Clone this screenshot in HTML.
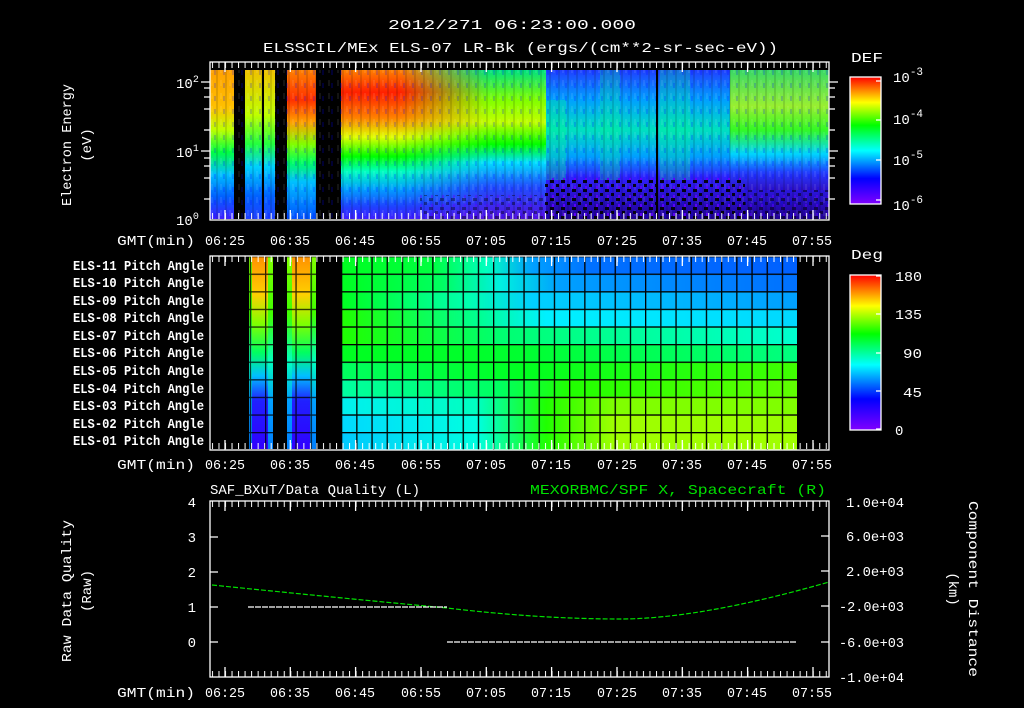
<!DOCTYPE html>
<html><head><meta charset="utf-8"><style>
html,body{margin:0;padding:0;background:#000;}
svg{display:block;}
text{font-family:"Liberation Mono","DejaVu Sans Mono",monospace;fill:#fff;font-size:14px;}
</style></head><body>
<svg width="1024" height="708" viewBox="0 0 1024 708" xmlns="http://www.w3.org/2000/svg">
<defs>
<linearGradient id="rain" x1="0" y1="1" x2="0" y2="0">
<stop offset="0" stop-color="#8000ff"/><stop offset="0.2" stop-color="#0000ff"/><stop offset="0.42" stop-color="#00ffff"/><stop offset="0.62" stop-color="#00ff00"/><stop offset="0.8" stop-color="#ffff00"/><stop offset="1" stop-color="#ff0000"/>
</linearGradient>
<linearGradient id="sA" x1="0" y1="0" x2="0" y2="1">
<stop offset="0" stop-color="#ffa000"/><stop offset="0.25" stop-color="#ffc000"/><stop offset="0.4" stop-color="#c0ff00"/><stop offset="0.55" stop-color="#00ff40"/><stop offset="0.7" stop-color="#00c0ff"/><stop offset="0.85" stop-color="#0060ff"/><stop offset="1" stop-color="#4020ff"/>
</linearGradient>
<linearGradient id="sB" x1="0" y1="0" x2="0" y2="1">
<stop offset="0" stop-color="#f0c000"/><stop offset="0.3" stop-color="#c0ff00"/><stop offset="0.5" stop-color="#20ff40"/><stop offset="0.65" stop-color="#00d0ff"/><stop offset="0.85" stop-color="#0060ff"/><stop offset="1" stop-color="#2040ff"/>
</linearGradient>
<linearGradient id="sC" x1="0" y1="0" x2="0" y2="1">
<stop offset="0" stop-color="#ff8000"/><stop offset="0.2" stop-color="#ff3000"/><stop offset="0.35" stop-color="#ffa000"/><stop offset="0.5" stop-color="#80ff00"/><stop offset="0.62" stop-color="#00ff60"/><stop offset="0.75" stop-color="#00c0ff"/><stop offset="1" stop-color="#0050ff"/>
</linearGradient>
<linearGradient id="sD" x1="0" y1="0" x2="0" y2="1">
<stop offset="0" stop-color="#ff8000"/><stop offset="0.15" stop-color="#ff2000"/><stop offset="0.32" stop-color="#ff8000"/><stop offset="0.45" stop-color="#e0ff00"/><stop offset="0.58" stop-color="#00ff00"/><stop offset="0.68" stop-color="#00ffc0"/><stop offset="0.8" stop-color="#00a0ff"/><stop offset="0.92" stop-color="#2040ff"/><stop offset="1" stop-color="#4020ff"/>
</linearGradient>
<linearGradient id="sD2" x1="0" y1="0" x2="0" y2="1">
<stop offset="0" stop-color="#00e080"/><stop offset="0.2" stop-color="#80ff00"/><stop offset="0.35" stop-color="#c0ff00"/><stop offset="0.5" stop-color="#00ff00"/><stop offset="0.62" stop-color="#00e0ff"/><stop offset="0.78" stop-color="#2050ff"/><stop offset="1" stop-color="#5010e0"/>
</linearGradient>
<linearGradient id="fadeW" x1="0" x2="1"><stop offset="0" stop-color="#fff" stop-opacity="0"/><stop offset="0.6" stop-color="#fff" stop-opacity="1"/><stop offset="1" stop-color="#fff" stop-opacity="1"/></linearGradient>
<mask id="mD" maskUnits="userSpaceOnUse" x="0" y="0" width="1024" height="708"><rect x="400" y="60" width="146" height="170" fill="url(#fadeW)"/></mask>
<linearGradient id="sE" x1="0" y1="0" x2="0" y2="1">
<stop offset="0" stop-color="#2040ff"/><stop offset="0.2" stop-color="#00a0ff"/><stop offset="0.4" stop-color="#00e0c0"/><stop offset="0.58" stop-color="#00a0ff"/><stop offset="0.72" stop-color="#3020ff"/><stop offset="1" stop-color="#200090"/>
</linearGradient>
<linearGradient id="sF" x1="0" y1="0" x2="0" y2="1">
<stop offset="0" stop-color="#40ff40"/><stop offset="0.3" stop-color="#c0ff00"/><stop offset="0.5" stop-color="#40ff00"/><stop offset="0.7" stop-color="#00e0ff"/><stop offset="0.85" stop-color="#2040ff"/><stop offset="1" stop-color="#3010c0"/>
</linearGradient>
<pattern id="noise" x="0" y="0" width="9" height="13" patternUnits="userSpaceOnUse">
<rect x="0" y="0" width="2" height="13" fill="#000" opacity="0.12"/><rect x="4" y="2" width="2" height="6" fill="#fff" opacity="0.08"/><rect x="7" y="5" width="2" height="5" fill="#0000ff" opacity="0.2"/>
</pattern>
<pattern id="speck" x="0" y="0" width="11" height="9" patternUnits="userSpaceOnUse">
<rect x="0" y="0" width="4" height="3" fill="#000"/><rect x="6" y="4" width="3" height="3" fill="#000"/><rect x="2" y="6" width="2" height="3" fill="#6000ff"/>
</pattern>
<pattern id="minB" x="225" y="0" width="6.53" height="708" patternUnits="userSpaceOnUse"><rect x="0" y="0" width="1" height="708" fill="#fff"/></pattern>
<pattern id="grid" x="341" y="256" width="15.2" height="17.6" patternUnits="userSpaceOnUse">
<rect x="0" y="0" width="1.3" height="17.6" fill="#000"/><rect x="0" y="0" width="15.2" height="1.3" fill="#000"/>
</pattern>
<linearGradient id="r0" x1="0" x2="1"><stop offset="0" stop-color="#00ff20"/><stop offset="0.2" stop-color="#00ff40"/><stop offset="0.32" stop-color="#00ffc0"/><stop offset="0.42" stop-color="#00a0ff"/><stop offset="0.55" stop-color="#0070ff"/><stop offset="1" stop-color="#0060ff"/></linearGradient>
<linearGradient id="r1" x1="0" x2="1"><stop offset="0" stop-color="#00ff20"/><stop offset="0.22" stop-color="#00ff60"/><stop offset="0.35" stop-color="#00f0e0"/><stop offset="0.48" stop-color="#00a0ff"/><stop offset="1" stop-color="#0070ff"/></linearGradient>
<linearGradient id="r2" x1="0" x2="1"><stop offset="0" stop-color="#00ff20"/><stop offset="0.28" stop-color="#00ffb0"/><stop offset="0.42" stop-color="#00d0ff"/><stop offset="1" stop-color="#00a0ff"/></linearGradient>
<linearGradient id="r3" x1="0" x2="1"><stop offset="0" stop-color="#20ff00"/><stop offset="0.3" stop-color="#00ff90"/><stop offset="0.45" stop-color="#00f0ff"/><stop offset="1" stop-color="#00d8ff"/></linearGradient>
<linearGradient id="r4" x1="0" x2="1"><stop offset="0" stop-color="#20ff00"/><stop offset="0.35" stop-color="#00ff70"/><stop offset="1" stop-color="#00ffd0"/></linearGradient>
<linearGradient id="r5" x1="0" x2="1"><stop offset="0" stop-color="#00ff20"/><stop offset="0.4" stop-color="#00ff30"/><stop offset="1" stop-color="#00ff80"/></linearGradient>
<linearGradient id="r6" x1="0" x2="1"><stop offset="0" stop-color="#00ff60"/><stop offset="0.4" stop-color="#00ff20"/><stop offset="1" stop-color="#40ff00"/></linearGradient>
<linearGradient id="r7" x1="0" x2="1"><stop offset="0" stop-color="#00ffa0"/><stop offset="0.35" stop-color="#00ff60"/><stop offset="0.5" stop-color="#20ff00"/><stop offset="1" stop-color="#60ff00"/></linearGradient>
<linearGradient id="r8" x1="0" x2="1"><stop offset="0" stop-color="#00f0f0"/><stop offset="0.3" stop-color="#00ffc0"/><stop offset="0.45" stop-color="#20ff00"/><stop offset="0.6" stop-color="#80ff00"/><stop offset="1" stop-color="#80ff00"/></linearGradient>
<linearGradient id="r9" x1="0" x2="1"><stop offset="0" stop-color="#00d8ff"/><stop offset="0.3" stop-color="#00ffe0"/><stop offset="0.45" stop-color="#20ff00"/><stop offset="0.6" stop-color="#a0ff00"/><stop offset="1" stop-color="#98ff00"/></linearGradient>
<linearGradient id="r10" x1="0" x2="1"><stop offset="0" stop-color="#00c8ff"/><stop offset="0.3" stop-color="#00ffe0"/><stop offset="0.45" stop-color="#20ff00"/><stop offset="0.6" stop-color="#a0ff00"/><stop offset="1" stop-color="#a0ff00"/></linearGradient>
<linearGradient id="st" x1="0" y1="0" x2="0" y2="1"><stop offset="0" stop-color="#ff9000"/><stop offset="0.2" stop-color="#ffd000"/><stop offset="0.35" stop-color="#80ff00"/><stop offset="0.5" stop-color="#00ff60"/><stop offset="0.62" stop-color="#00c0ff"/><stop offset="0.75" stop-color="#2020ff"/><stop offset="1" stop-color="#3000ff"/></linearGradient>
<linearGradient id="st2" x1="0" y1="0" x2="0" y2="1"><stop offset="0" stop-color="#80ff00"/><stop offset="0.3" stop-color="#40ff00"/><stop offset="0.55" stop-color="#00ffc0"/><stop offset="0.75" stop-color="#00a0ff"/><stop offset="1" stop-color="#0080ff"/></linearGradient>
</defs>

<text x="388" y="29" font-size="17" textLength="248" lengthAdjust="spacingAndGlyphs">2012/271 06:23:00.000</text>
<text x="263" y="52" font-size="17" textLength="515" lengthAdjust="spacingAndGlyphs">ELSSCIL/MEx ELS-07 LR-Bk  (ergs/(cm**2-sr-sec-eV))</text>

<!-- TOP SPECTROGRAM -->
<rect x="210" y="70" width="24" height="149" fill="url(#sA)"/>
<rect x="245" y="70" width="30" height="149" fill="url(#sB)"/>
<rect x="262" y="70" width="2" height="149" fill="#000"/>
<rect x="287" y="70" width="29" height="149" fill="url(#sC)"/>
<rect x="341" y="70" width="205" height="149" fill="url(#sD)"/>
<rect x="400" y="70" width="146" height="149" fill="url(#sD2)" mask="url(#mD)"/>
<rect x="546" y="70" width="283" height="149" fill="url(#sE)"/>
<rect x="546" y="100" width="20" height="80" fill="#00ff80" opacity="0.3"/>
<rect x="600" y="70" width="20" height="110" fill="#00ff80" opacity="0.25"/>
<rect x="660" y="70" width="30" height="110" fill="#00ff80" opacity="0.25"/>
<rect x="730" y="70" width="99" height="120" fill="url(#sF)" opacity="0.8"/>
<rect x="210" y="70" width="619" height="149" fill="url(#noise)"/>
<rect x="545" y="178" width="200" height="41" fill="url(#speck)" opacity="0.9"/>
<rect x="745" y="190" width="84" height="29" fill="url(#speck)" opacity="0.5"/>
<rect x="420" y="195" width="125" height="24" fill="url(#speck)" opacity="0.4"/>
<rect x="656" y="70" width="2" height="150" fill="#000"/>
<!-- top axes -->
<rect x="210" y="62" width="619" height="158" fill="none" stroke="#fff" stroke-width="1.3"/>
<rect x="210" y="62" width="619" height="6" fill="url(#minB)"/>
<rect x="210" y="213" width="619" height="6" fill="url(#minB)"/>
<g stroke="#fff" stroke-width="1.3">
<path d="M225 62v10M290.3 62v10M355.6 62v10M421 62v10M486.3 62v10M551.6 62v10M617 62v10M682.3 62v10M747.6 62v10M813 62v10"/>
<path d="M225 220v-10M290.3 220v-10M355.6 220v-10M421 220v-10M486.3 220v-10M551.6 220v-10M617 220v-10M682.3 220v-10M747.6 220v-10M813 220v-10"/>
<path d="M201 82h9M201 151h9M204 88h6M204 97h6M204 109h6M204 130h6M204 158h6M204 166h6M204 178h6M204 199h6"/>
<path d="M829 82h9M829 151h9M829 88h6M829 97h6M829 109h6M829 130h6M829 158h6M829 166h6M829 178h6M829 199h6"/>
</g>
<text x="176" y="88" font-size="15">10<tspan font-size="10" dy="-6">2</tspan></text>
<text x="176" y="157" font-size="15">10<tspan font-size="10" dy="-6">1</tspan></text>
<text x="176" y="225" font-size="15">10<tspan font-size="10" dy="-6">0</tspan></text>
<text transform="translate(71,145) rotate(-90)" text-anchor="middle" font-size="15" textLength="122" lengthAdjust="spacingAndGlyphs">Electron Energy</text>
<text transform="translate(91,145) rotate(-90)" text-anchor="middle" font-size="15">(eV)</text>
<g font-size="14">
<text x="117" y="245" textLength="78" lengthAdjust="spacingAndGlyphs">GMT(min)</text>
<text x="205" y="245" textLength="40" lengthAdjust="spacingAndGlyphs">06:25</text><text x="270" y="245" textLength="40" lengthAdjust="spacingAndGlyphs">06:35</text><text x="335" y="245" textLength="40" lengthAdjust="spacingAndGlyphs">06:45</text><text x="401" y="245" textLength="40" lengthAdjust="spacingAndGlyphs">06:55</text><text x="466" y="245" textLength="40" lengthAdjust="spacingAndGlyphs">07:05</text><text x="531" y="245" textLength="40" lengthAdjust="spacingAndGlyphs">07:15</text><text x="597" y="245" textLength="40" lengthAdjust="spacingAndGlyphs">07:25</text><text x="662" y="245" textLength="40" lengthAdjust="spacingAndGlyphs">07:35</text><text x="727" y="245" textLength="40" lengthAdjust="spacingAndGlyphs">07:45</text><text x="792" y="245" textLength="40" lengthAdjust="spacingAndGlyphs">07:55</text>
</g>
<!-- colorbar top -->
<text x="851" y="62" font-size="17" textLength="32" lengthAdjust="spacingAndGlyphs">DEF</text>
<rect x="850" y="77" width="31" height="127" fill="url(#rain)" stroke="#fff" stroke-width="1.3"/>
<g stroke="#fff" stroke-width="1.3"><path d="M881 81h-5M881 120h-5M881 160h-5M881 200h-5"/></g>
<text x="893" y="82" font-size="16">10<tspan font-size="11" dy="-7">-3</tspan></text>
<text x="893" y="124" font-size="16">10<tspan font-size="11" dy="-7">-4</tspan></text>
<text x="893" y="165" font-size="16">10<tspan font-size="11" dy="-7">-5</tspan></text>
<text x="893" y="210" font-size="16">10<tspan font-size="11" dy="-7">-6</tspan></text>

<!-- MIDDLE PITCH ANGLE -->
<rect x="249" y="256" width="23" height="193" fill="url(#st)"/>
<rect x="287" y="256" width="29" height="193" fill="url(#st)"/>
<rect x="249" y="256" width="3" height="193" fill="url(#st2)"/>
<rect x="268" y="256" width="5" height="193" fill="url(#st2)"/>
<rect x="287" y="256" width="5" height="193" fill="url(#st2)"/>
<rect x="310" y="256" width="6" height="193" fill="url(#st2)"/>
<rect x="341" y="256" width="456" height="17.6" fill="url(#r0)"/>
<rect x="341" y="273.6" width="456" height="17.6" fill="url(#r1)"/>
<rect x="341" y="291.2" width="456" height="17.6" fill="url(#r2)"/>
<rect x="341" y="308.8" width="456" height="17.6" fill="url(#r3)"/>
<rect x="341" y="326.4" width="456" height="17.6" fill="url(#r4)"/>
<rect x="341" y="344" width="456" height="17.6" fill="url(#r5)"/>
<rect x="341" y="361.6" width="456" height="17.6" fill="url(#r6)"/>
<rect x="341" y="379.2" width="456" height="17.6" fill="url(#r7)"/>
<rect x="341" y="396.8" width="456" height="17.6" fill="url(#r8)"/>
<rect x="341" y="414.4" width="456" height="17.6" fill="url(#r9)"/>
<rect x="341" y="432" width="456" height="17.6" fill="url(#r10)"/>
<rect x="341" y="256" width="457" height="194" fill="url(#grid)"/>
<rect x="249" y="256" width="67" height="194" fill="url(#grid)" opacity="0.8"/>
<rect x="210" y="256" width="619" height="194" fill="none" stroke="#fff" stroke-width="1.3"/>
<rect x="210" y="256" width="619" height="6" fill="url(#minB)"/>
<rect x="210" y="443" width="619" height="6" fill="url(#minB)"/>
<g stroke="#fff" stroke-width="1.3">
<path d="M225 256v10M290.3 256v10M355.6 256v10M421 256v10M486.3 256v10M551.6 256v10M617 256v10M682.3 256v10M747.6 256v10M813 256v10"/>
<path d="M225 450v-10M290.3 450v-10M355.6 450v-10M421 450v-10M486.3 450v-10M551.6 450v-10M617 450v-10M682.3 450v-10M747.6 450v-10M813 450v-10"/>
</g>
<g font-size="14" font-weight="bold">
<text x="73" y="270" textLength="131" lengthAdjust="spacingAndGlyphs">ELS-11 Pitch Angle</text><text x="73" y="287" textLength="131" lengthAdjust="spacingAndGlyphs">ELS-10 Pitch Angle</text><text x="73" y="305" textLength="131" lengthAdjust="spacingAndGlyphs">ELS-09 Pitch Angle</text><text x="73" y="322" textLength="131" lengthAdjust="spacingAndGlyphs">ELS-08 Pitch Angle</text><text x="73" y="340" textLength="131" lengthAdjust="spacingAndGlyphs">ELS-07 Pitch Angle</text><text x="73" y="357" textLength="131" lengthAdjust="spacingAndGlyphs">ELS-06 Pitch Angle</text><text x="73" y="375" textLength="131" lengthAdjust="spacingAndGlyphs">ELS-05 Pitch Angle</text><text x="73" y="393" textLength="131" lengthAdjust="spacingAndGlyphs">ELS-04 Pitch Angle</text><text x="73" y="410" textLength="131" lengthAdjust="spacingAndGlyphs">ELS-03 Pitch Angle</text><text x="73" y="428" textLength="131" lengthAdjust="spacingAndGlyphs">ELS-02 Pitch Angle</text><text x="73" y="445" textLength="131" lengthAdjust="spacingAndGlyphs">ELS-01 Pitch Angle</text>
</g>
<g font-size="14">
<text x="117" y="469" textLength="78" lengthAdjust="spacingAndGlyphs">GMT(min)</text>
<text x="205" y="469" textLength="40" lengthAdjust="spacingAndGlyphs">06:25</text><text x="270" y="469" textLength="40" lengthAdjust="spacingAndGlyphs">06:35</text><text x="335" y="469" textLength="40" lengthAdjust="spacingAndGlyphs">06:45</text><text x="401" y="469" textLength="40" lengthAdjust="spacingAndGlyphs">06:55</text><text x="466" y="469" textLength="40" lengthAdjust="spacingAndGlyphs">07:05</text><text x="531" y="469" textLength="40" lengthAdjust="spacingAndGlyphs">07:15</text><text x="597" y="469" textLength="40" lengthAdjust="spacingAndGlyphs">07:25</text><text x="662" y="469" textLength="40" lengthAdjust="spacingAndGlyphs">07:35</text><text x="727" y="469" textLength="40" lengthAdjust="spacingAndGlyphs">07:45</text><text x="792" y="469" textLength="40" lengthAdjust="spacingAndGlyphs">07:55</text>
</g>
<text x="851" y="259" font-size="17" textLength="32" lengthAdjust="spacingAndGlyphs">Deg</text>
<rect x="850" y="275" width="31" height="155" fill="url(#rain)" stroke="#fff" stroke-width="1.3"/>
<g stroke="#fff" stroke-width="1.3"><path d="M881 276h-5M881 314h-5M881 353h-5M881 391h-5M881 429h-5"/></g>
<g font-size="16"><text x="895" y="281" textLength="27" lengthAdjust="spacingAndGlyphs">180</text><text x="895" y="319" textLength="27" lengthAdjust="spacingAndGlyphs">135</text><text x="903" y="358" textLength="19" lengthAdjust="spacingAndGlyphs">90</text><text x="903" y="397" textLength="19" lengthAdjust="spacingAndGlyphs">45</text><text x="895" y="435">0</text></g>

<!-- BOTTOM -->
<text x="210" y="494" font-size="16" textLength="210" lengthAdjust="spacingAndGlyphs">SAF_BXuT/Data Quality (L)</text>
<text x="530" y="494" font-size="16" textLength="296" lengthAdjust="spacingAndGlyphs" style="fill:#00e000">MEXORBMC/SPF X, Spacecraft (R)</text>
<rect x="210" y="501" width="619" height="176" fill="none" stroke="#fff" stroke-width="1.3"/>
<rect x="210" y="501" width="619" height="6" fill="url(#minB)"/>
<rect x="210" y="671" width="619" height="6" fill="url(#minB)"/>
<g stroke="#fff" stroke-width="1.3">
<path d="M225 501v10M290.3 501v10M355.6 501v10M421 501v10M486.3 501v10M551.6 501v10M617 501v10M682.3 501v10M747.6 501v10M813 501v10"/>
<path d="M225 677v-10M290.3 677v-10M355.6 677v-10M421 677v-10M486.3 677v-10M551.6 677v-10M617 677v-10M682.3 677v-10M747.6 677v-10M813 677v-10"/>
<path d="M210 537h8M210 572h8M210 607h8M210 642h8M829 536h-8M829 571h-8M829 606h-8M829 642h-8"/>
</g>
<path d="M212 585 Q330 597 447 608 Q540 619 620 619 Q700 619 829 582" fill="none" stroke="#00e000" stroke-width="1.2" stroke-dasharray="5 2"/>
<path d="M248 607H447M447 642H797" fill="none" stroke="#fff" stroke-width="1.2" stroke-dasharray="6 1"/>
<g font-size="15" text-anchor="end">
<text x="196" y="507">4</text><text x="196" y="542">3</text><text x="196" y="577">2</text><text x="196" y="612">1</text><text x="196" y="647">0</text>
</g>
<g font-size="14">
<text x="846" y="507" textLength="58" lengthAdjust="spacingAndGlyphs">1.0e+04</text><text x="846" y="541" textLength="58" lengthAdjust="spacingAndGlyphs">6.0e+03</text><text x="846" y="576" textLength="58" lengthAdjust="spacingAndGlyphs">2.0e+03</text><text x="839" y="611" textLength="65" lengthAdjust="spacingAndGlyphs">-2.0e+03</text><text x="839" y="647" textLength="65" lengthAdjust="spacingAndGlyphs">-6.0e+03</text><text x="839" y="682" textLength="65" lengthAdjust="spacingAndGlyphs">-1.0e+04</text>
</g>
<text transform="translate(71,591) rotate(-90)" text-anchor="middle" font-size="15" textLength="142" lengthAdjust="spacingAndGlyphs">Raw Data Quality</text>
<text transform="translate(91,591) rotate(-90)" text-anchor="middle" font-size="15">(Raw)</text>
<text transform="translate(969,589) rotate(90)" text-anchor="middle" font-size="15" textLength="176" lengthAdjust="spacingAndGlyphs">Component Distance</text>
<text transform="translate(949,589) rotate(90)" text-anchor="middle" font-size="15">(km)</text>
<g font-size="14">
<text x="117" y="697" textLength="78" lengthAdjust="spacingAndGlyphs">GMT(min)</text>
<text x="205" y="697" textLength="40" lengthAdjust="spacingAndGlyphs">06:25</text><text x="270" y="697" textLength="40" lengthAdjust="spacingAndGlyphs">06:35</text><text x="335" y="697" textLength="40" lengthAdjust="spacingAndGlyphs">06:45</text><text x="401" y="697" textLength="40" lengthAdjust="spacingAndGlyphs">06:55</text><text x="466" y="697" textLength="40" lengthAdjust="spacingAndGlyphs">07:05</text><text x="531" y="697" textLength="40" lengthAdjust="spacingAndGlyphs">07:15</text><text x="597" y="697" textLength="40" lengthAdjust="spacingAndGlyphs">07:25</text><text x="662" y="697" textLength="40" lengthAdjust="spacingAndGlyphs">07:35</text><text x="727" y="697" textLength="40" lengthAdjust="spacingAndGlyphs">07:45</text><text x="792" y="697" textLength="40" lengthAdjust="spacingAndGlyphs">07:55</text>
</g>
</svg>
</body></html>
